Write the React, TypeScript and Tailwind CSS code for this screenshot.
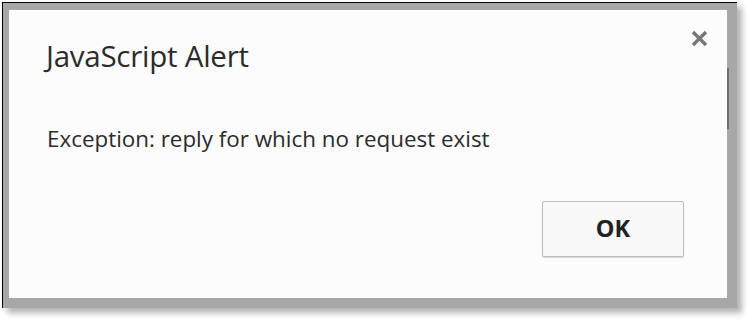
import React from "react";

export default function App() {
  return (
    <div className="w-[756px] h-[330px] bg-white relative overflow-hidden" style={{ fontFamily: '"Open Sans", "Noto Sans", sans-serif' }}>
      <div className="absolute left-[2px] top-[2px] w-[735px] h-[306px] border-l border-t border-black bg-[#a7a7a7] pl-[6px] pt-[7px] pr-[10px] pb-[10px] shadow-[5px_5px_6px_rgba(0,0,0,0.3)]">
        <div className="w-full h-full bg-[#fcfcfc] relative flex flex-col">
          <div className="pl-[37px] pt-[28px] text-[29.5px] leading-[36px] text-[#2b2b2b] tracking-[-0.25px]">JavaScript Alert</div>
          <svg width="17" height="17" viewBox="0 0 17 17" className="absolute right-[19px] top-[20px]">
            <path d="M2 2 L15 15 M15 2 L2 15" stroke="#777" strokeWidth="3.4" strokeLinecap="butt" />
          </svg>
          <div className="pl-[38px] pt-[51px] text-[22.4px] leading-[28px] text-[#2b2b2b]">Exception: reply for which no request exist</div>
          <div className="flex justify-end pr-[43px] pt-[48px]">
            <button className="w-[142px] h-[56px] border border-[#bdbdbd] rounded-[2px] bg-[#f8f8f8] shadow-[0_1px_1px_rgba(0,0,0,0.15)] text-[23.5px] font-bold text-[#222]">OK</button>
          </div>
        </div>
        <div className="absolute left-[724px] top-[65px] w-[2px] h-[61px] bg-[#6f6f6f]" />
      </div>
    </div>
  );
}
